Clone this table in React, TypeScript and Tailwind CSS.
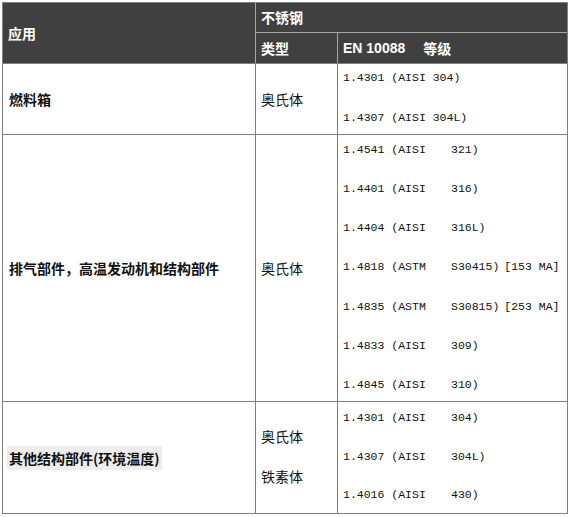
const cjk = '"Noto Sans CJK SC", "Liberation Sans", sans-serif';
const mono = '"Liberation Mono", "Noto Sans CJK SC", monospace';

type Grade = { a: string; b?: string; c?: string };

const GradeLine = ({ g }: { g: Grade }) => (
  <div className="flex h-[20px] items-center whitespace-pre text-[11.5px] leading-[20px] text-[#111]" style={{ fontFamily: mono }}>
    {g.b ? (
      <>
        <span className="inline-block w-[108px]">{g.a}</span>
        <span>{g.b}</span>
        {g.c && <span className="ml-[5px]">{g.c}</span>}
      </>
    ) : (
      <span>{g.a}</span>
    )}
  </div>
);

const exhaust: Grade[] = [
  { a: '1.4541 (AISI', b: '321)' },
  { a: '1.4401 (AISI', b: '316)' },
  { a: '1.4404 (AISI', b: '316L)' },
  { a: '1.4818 (ASTM', b: 'S30415)', c: '[153 MA]' },
  { a: '1.4835 (ASTM', b: 'S30815)', c: '[253 MA]' },
  { a: '1.4833 (AISI', b: '309)' },
  { a: '1.4845 (AISI', b: '310)' },
];

const other: Grade[] = [
  { a: '1.4301 (AISI', b: '304)' },
  { a: '1.4307 (AISI', b: '304L)' },
  { a: '1.4016 (AISI', b: '430)' },
];

export default function App() {
  return (
    <div className="min-h-screen bg-white pl-[2px] pt-[2px]" style={{ fontFamily: cjk }}>
      <div className="w-[566px] border border-[#808080]">
        {/* header */}
        <div className="flex h-[60px] bg-[#404040] text-[14px] font-bold text-white">
          <div className="flex w-[253px] items-center border-r border-[#a8a8a8] pl-[5px]">应用</div>
          <div className="flex flex-1 flex-col">
            <div className="flex h-[30px] items-center border-b border-[#a8a8a8] pl-[5px]">不锈钢</div>
            <div className="flex flex-1">
              <div className="flex w-[82px] items-center border-r border-[#a8a8a8] pl-[5px]">类型</div>
              <div className="flex flex-1 items-center pl-[5px]">
                <span style={{ fontFamily: '"Liberation Sans", sans-serif' }}>EN 10088</span>
                <span className="ml-[18px]">等级</span>
              </div>
            </div>
          </div>
        </div>

        {/* row 1 */}
        <div className="flex h-[71px] border-t border-[#808080] text-[14px] text-[#111]">
          <div className="flex w-[253px] items-center border-r border-[#808080] pl-[6px] font-bold">燃料箱</div>
          <div className="flex w-[82px] items-center border-r border-[#808080] pl-[5px]">奥氏体</div>
          <div className="flex flex-1 flex-col justify-between pb-[6px] pl-[5px] pt-[4px]">
            <GradeLine g={{ a: '1.4301 (AISI 304)' }} />
            <GradeLine g={{ a: '1.4307 (AISI 304L)' }} />
          </div>
        </div>

        {/* row 2 */}
        <div className="flex h-[267px] border-t border-[#808080] text-[14px] text-[#111]">
          <div className="flex w-[253px] items-center border-r border-[#808080] pl-[6px] font-bold">排气部件，高温发动机和结构部件</div>
          <div className="flex w-[82px] items-center border-r border-[#808080] pl-[5px]">奥氏体</div>
          <div className="flex flex-1 flex-col justify-between pb-[6px] pl-[5px] pt-[5px]">
            {exhaust.map((g, i) => (
              <GradeLine key={i} g={g} />
            ))}
          </div>
        </div>

        {/* row 3 */}
        <div className="flex h-[112px] border-t border-[#808080] text-[14px] text-[#111]">
          <div className="flex w-[253px] items-center border-r border-[#808080] pl-[4px]">
            <span className="bg-[#ededed] px-[2px] font-bold leading-[24px]">其他结构部件(环境温度)</span>
          </div>
          <div className="flex w-[82px] flex-col justify-center border-r border-[#808080] pb-[4px] pl-[5px] leading-[40px]">
            <div>奥氏体</div>
            <div>铁素体</div>
          </div>
          <div className="flex flex-1 flex-col justify-between pb-[8px] pl-[5px] pt-[6px]">
            {other.map((g, i) => (
              <GradeLine key={i} g={g} />
            ))}
          </div>
        </div>
      </div>
    </div>
  );
}
